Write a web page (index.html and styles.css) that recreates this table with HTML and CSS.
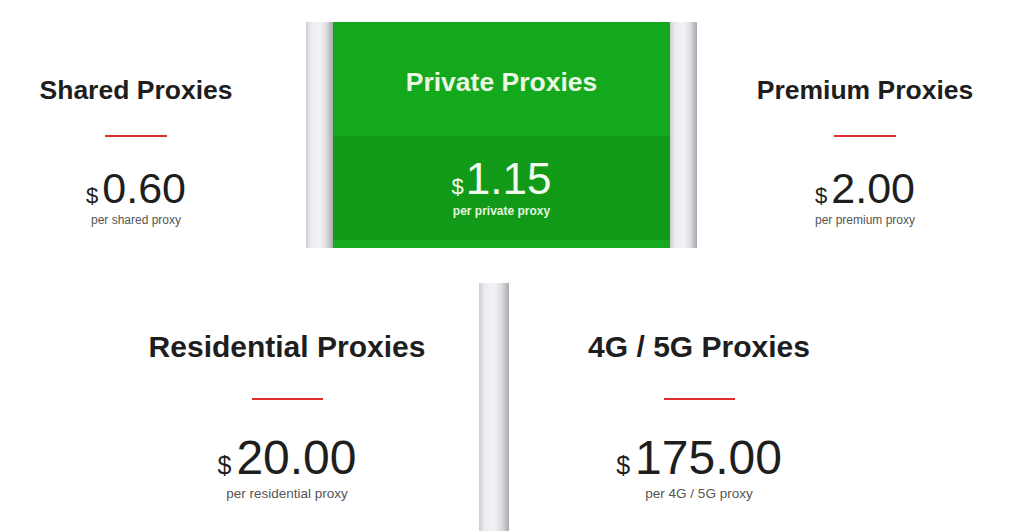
FILE: index.html
```html
<!DOCTYPE html>
<html lang="en">
<head>
<meta charset="utf-8">
<title>Proxy Pricing</title>
<link rel="stylesheet" href="styles.css">
</head>
<body>
<main class="pricing">
  <section class="row row-top">
    <div class="plan plan-left">
      <h2 class="plan-title">Shared Proxies</h2>
      <span class="rule"></span>
      <p class="price"><span class="cur">$</span>0.60</p>
      <p class="per">per shared proxy</p>
    </div>
    <div class="featured">
      <div class="pillar"></div>
      <div class="card">
        <div class="card-head">
          <h2 class="card-title">Private Proxies</h2>
        </div>
        <div class="card-body">
          <p class="price price-card"><span class="cur">$</span>1.15</p>
          <p class="per per-card">per private proxy</p>
        </div>
        <div class="card-foot"></div>
      </div>
      <div class="pillar"></div>
    </div>
    <div class="plan plan-right">
      <h2 class="plan-title">Premium Proxies</h2>
      <span class="rule"></span>
      <p class="price"><span class="cur">$</span>2.00</p>
      <p class="per">per premium proxy</p>
    </div>
  </section>
  <section class="row row-bottom">
    <div class="plan plan-lg plan-res">
      <h2 class="plan-title">Residential Proxies</h2>
      <span class="rule"></span>
      <p class="price"><span class="cur">$</span>20.00</p>
      <p class="per">per residential proxy</p>
    </div>
    <div class="pillar pillar-divider"></div>
    <div class="plan plan-lg plan-mobile">
      <h2 class="plan-title">4G / 5G Proxies</h2>
      <span class="rule"></span>
      <p class="price"><span class="cur">$</span>175.00</p>
      <p class="per">per 4G / 5G proxy</p>
    </div>
  </section>
</main>
</body>
</html>
```

FILE: styles.css
```css
* { box-sizing: border-box; }

html, body {
  margin: 0;
  padding: 0;
  background: #ffffff;
  overflow: hidden;
}

body {
  font-family: "Liberation Sans", Arial, sans-serif;
  color: #222222;
  width: 1024px;
  height: 531px;
}

.pricing {
  display: flex;
  flex-direction: column;
}

.row {
  display: flex;
  align-items: flex-start;
}

.row-top {
  padding-top: 22px;
  height: 248px;
}

.row-bottom {
  margin-top: 35px;
  padding-left: 95px;
  height: 248px;
}

.plan {
  display: flex;
  flex-direction: column;
  align-items: center;
  text-align: center;
}

.plan-left { width: 272px; }
.plan-right { width: 264px; }

.plan-title {
  margin: 53px 0 0;
  font-size: 26.5px;
  line-height: 30px;
  font-weight: 700;
  color: #1e1e1e;
  white-space: nowrap;
}

.rule {
  display: block;
  width: 62px;
  height: 2px;
  margin-top: 30px;
  background: #dc2f2f;
}

.price {
  margin: 30px 0 0;
  font-size: 43px;
  line-height: 43px;
  font-weight: 400;
  color: #1e1e1e;
  white-space: nowrap;
}

.cur {
  font-size: 22px;
  line-height: 1;
  margin-right: 4px;
}

.per {
  margin: 3px 0 0;
  font-size: 12px;
  line-height: 14px;
  color: #555555;
  white-space: nowrap;
}

/* featured card */
.featured {
  display: flex;
  width: 391px;
  height: 226px;
  margin: 0 36px 0 34px;
}

.pillar {
  width: 27px;
  background: linear-gradient(90deg, #cdcdd1 0%, #ececf0 18%, #f3f2f6 50%, #dedee2 75%, #a7a9ad 100%);
}

.card {
  flex: 1;
  display: flex;
  flex-direction: column;
  color: #eef8ea;
}

.card-head {
  height: 114px;
  padding-top: 45px;
  background: #14a81c;
  text-align: center;
}

.card-title {
  margin: 0;
  font-size: 26.5px;
  line-height: 30px;
  font-weight: 700;
  color: #eaf7e4;
}

.card-body {
  height: 104px;
  padding-top: 21px;
  background: #119a18;
  display: flex;
  flex-direction: column;
  align-items: center;
}

.card-foot {
  flex: 1;
  background: #17aa1f;
}

.price-card {
  margin: 0;
  font-size: 44px;
  line-height: 44px;
  color: #f1faee;
}

.price-card .cur { margin-right: 2px; }

.per-card {
  margin: 3px 0 0;
  font-size: 12px;
  line-height: 14px;
  font-weight: 700;
  color: #e4f4de;
}

/* bottom row */
.plan-res { width: 384px; }
.plan-mobile { width: 380px; }

.plan-lg .plan-title {
  margin-top: 47px;
  font-size: 30px;
  line-height: 34px;
}

.plan-lg .rule {
  width: 71px;
  margin-top: 34px;
}

.plan-lg .price {
  margin-top: 34px;
  font-size: 48px;
  line-height: 48px;
}

.plan-lg .cur {
  font-size: 25px;
  margin-right: 5px;
}

.plan-lg .per {
  margin-top: 4px;
  font-size: 13.5px;
  line-height: 16px;
}

.pillar-divider {
  width: 30px;
  height: 248px;
}
```
